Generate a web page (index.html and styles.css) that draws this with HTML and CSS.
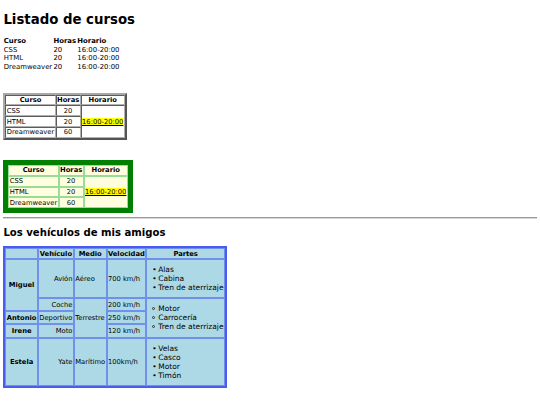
FILE: index.html
```html
<!DOCTYPE html>
<html lang="es">
<head>
<meta charset="utf-8">
<title>Listado de cursos</title>
<link rel="stylesheet" href="styles.css">
</head>
<body class="page">
<h1 class="title">Listado de cursos</h1>

<table class="plain">
  <tr><th class="left">Curso</th><th class="left">Horas</th><th class="left">Horario</th></tr>
  <tr><td>CSS</td><td>20</td><td>16:00-20:00</td></tr>
  <tr><td>HTML</td><td>20</td><td>16:00-20:00</td></tr>
  <tr><td>Dreamweaver</td><td>20</td><td>16:00-20:00</td></tr>
</table>

<table class="grid gray">
  <tr><th>Curso</th><th>Horas</th><th>Horario</th></tr>
  <tr><td>CSS</td><td class="center">20</td><td rowspan="3" class="center"><span class="mark">16:00-20:00</span></td></tr>
  <tr><td>HTML</td><td class="center">20</td></tr>
  <tr><td>Dreamweaver</td><td class="center">60</td></tr>
</table>

<table class="grid green">
  <tr><th>Curso</th><th>Horas</th><th>Horario</th></tr>
  <tr><td>CSS</td><td class="center">20</td><td rowspan="3" class="center"><span class="mark">16:00-20:00</span></td></tr>
  <tr><td>HTML</td><td class="center">20</td></tr>
  <tr><td>Dreamweaver</td><td class="center">60</td></tr>
</table>

<hr class="rule">

<h2 class="subtitle">Los vehículos de mis amigos</h2>

<table class="grid blue">
  <tr><th></th><th>Vehículo</th><th>Medio</th><th>Velocidad</th><th>Partes</th></tr>
  <tr>
    <th rowspan="2">Miguel</th>
    <td class="right">Avión</td>
    <td>Aéreo</td>
    <td>700 km/h</td>
    <td><ul class="parts"><li>Alas</li><li>Cabina</li><li>Tren de aterrizaje</li></ul></td>
  </tr>
  <tr>
    <td class="right">Coche</td>
    <td rowspan="3">Terrestre</td>
    <td>200 km/h</td>
    <td rowspan="3"><ul class="parts circle"><li>Motor</li><li>Carrocería</li><li>Tren de aterrizaje</li></ul></td>
  </tr>
  <tr>
    <th>Antonio</th>
    <td class="right">Deportivo</td>
    <td>250 km/h</td>
  </tr>
  <tr>
    <th>Irene</th>
    <td class="right">Moto</td>
    <td>120 km/h</td>
  </tr>
  <tr>
    <th>Estela</th>
    <td class="right">Yate</td>
    <td>Marítimo</td>
    <td>100km/h</td>
    <td><ul class="parts"><li>Velas</li><li>Casco</li><li>Motor</li><li>Timón</li></ul></td>
  </tr>
</table>
</body>
</html>
```

FILE: styles.css
```css
html {
  background: #ffffff;
}

.page {
  margin: 3.4px;
  font-family: "DejaVu Sans", Verdana, sans-serif;
  font-size: 6.75px;
  color: #000000;
}

.title {
  font-size: 13.3px;
  font-weight: bold;
  margin: 9px 0;
}

.subtitle {
  font-size: 10.1px;
  font-weight: bold;
  margin: 8.4px 0;
}

table {
  border-spacing: 0.84px;
  font-size: 6.75px;
}

th, td {
  padding: 0.42px;
}

.plain {
  margin-top: 2px;
  margin-bottom: 21px;
  font-size: 6.9px;
}

.plain td,
.plain th {
  padding: 0.42px 0.8px 0.42px 0.42px;
}

.left {
  text-align: left;
}

.center {
  text-align: center;
}

.right {
  text-align: right;
}

.mark {
  background: #ffff00;
  text-decoration: underline;
}

.grid.gray {
  border: 2px outset #a8a8a8;
  margin-bottom: 20px;
}

.grid.gray th,
.grid.gray td {
  border: 1px inset #b0b0b0;
}

.grid.green {
  border: 5px solid #008000;
  background: #ffffe0;
}

.grid.green th,
.grid.green td {
  border: 1px solid #98dc98;
  background: #ffffe0;
}

.rule {
  border: 0;
  border-top: 1px solid #9a9a9a;
  border-bottom: 1px solid #d8d8d8;
  margin: 3.4px 0;
  height: 0;
}

.grid.blue {
  border: 2px solid #4a5cf0;
  background: #add8e6;
}

.grid.blue th,
.grid.blue td {
  border: 1px solid #7090ec;
  background: #add8e6;
}

.parts {
  margin: 4.7px 0;
  padding-left: 10.5px;
  list-style: none;
  font-size: 7.5px;
}

.parts li::before {
  content: "\2022";
  display: inline-block;
  width: 6px;
  margin-left: -6px;
}

.parts.circle li::before {
  content: "";
  box-sizing: border-box;
  width: 3px;
  height: 3px;
  border: 0.8px solid #303030;
  border-radius: 50%;
  margin-left: -6px;
  margin-right: 3px;
  vertical-align: 0.15em;
}
```
